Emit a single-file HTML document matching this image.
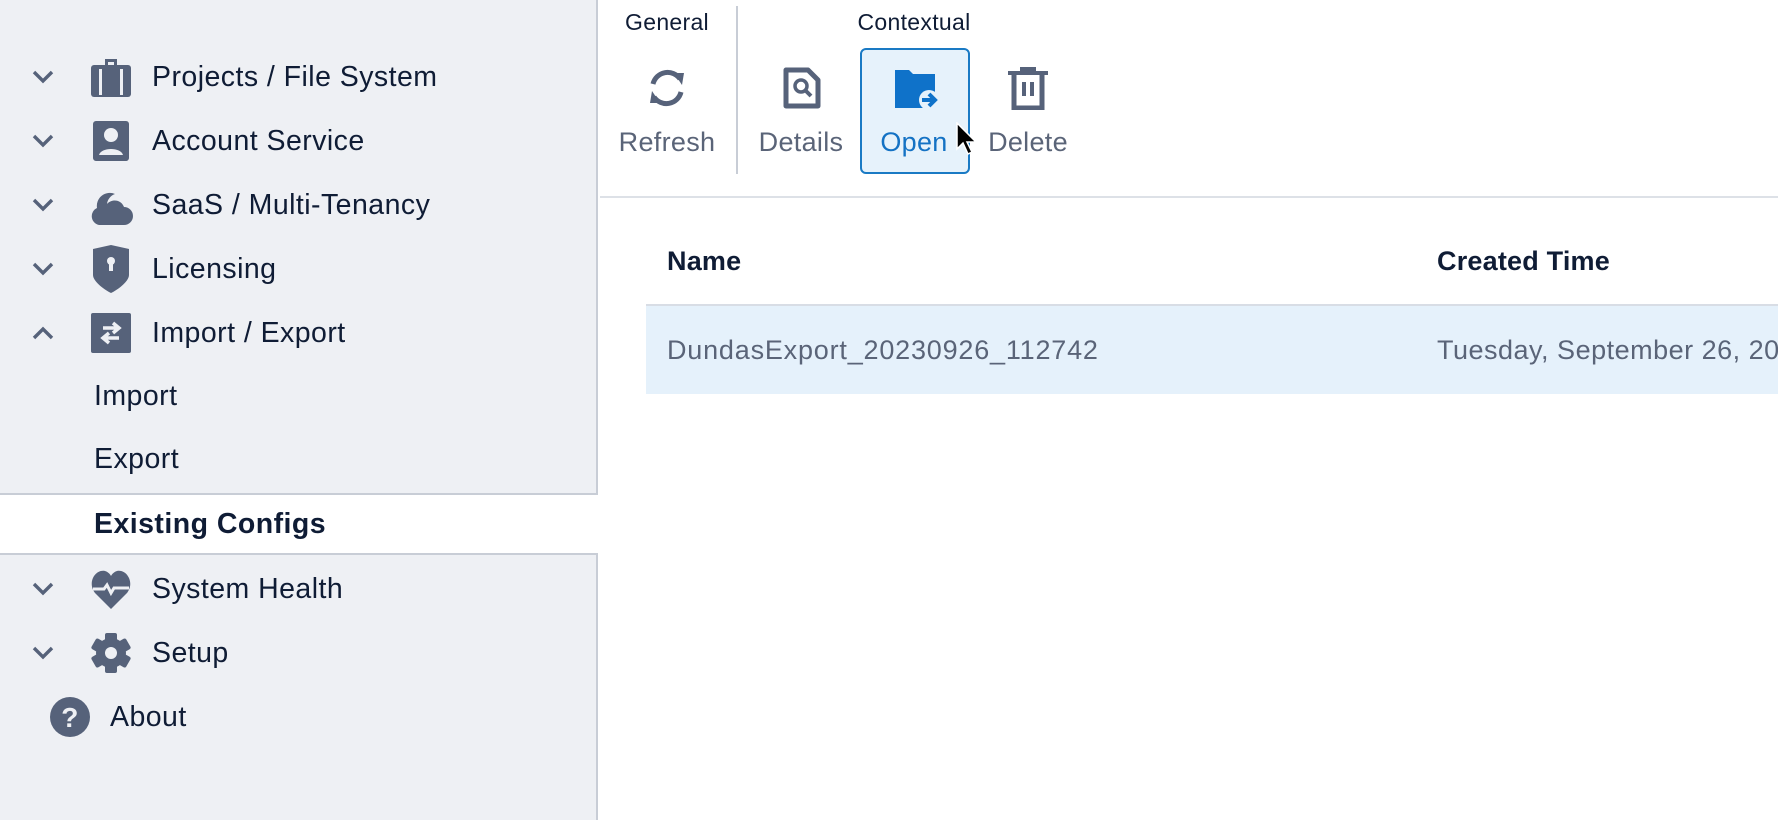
<!DOCTYPE html>
<html><head><meta charset="utf-8"><style>
*{margin:0;padding:0;box-sizing:border-box}
body{width:1778px;height:820px;overflow:hidden;background:#fff;font-family:"Liberation Sans",sans-serif;position:relative;color:#0f1c35}
#side{position:absolute;left:0;top:0;width:598px;height:820px;background:#eef0f4;border-right:2px solid #c8cdd6}
.row{position:absolute;left:0;height:40px;display:flex;align-items:center;font-size:28.5px;white-space:nowrap;letter-spacing:0.45px}
.chev{position:absolute;left:31px;width:24px;height:24px}
.ic{position:absolute;left:91px;width:40px;height:40px}
.t{position:absolute;left:152px}
.sub{position:absolute;left:94px;font-size:28.5px;white-space:nowrap;letter-spacing:0.45px}
.abs{position:absolute}
.lbl{position:absolute;font-size:27px;color:#5a6478;transform:translateX(-50%);white-space:nowrap;letter-spacing:0.3px}
</style></head><body>
<div id="side">
<div class="abs" style="left:0;top:493px;width:598px;height:62px;background:#fff;border-top:2px solid #c8cdd6;border-bottom:2px solid #c8cdd6"></div>
</div>
<svg width="0" height="0" style="position:absolute"><defs>
<symbol id="dn" viewBox="0 0 24 24"><path d="M3 7l9 9 9-9" fill="none" stroke="#56627a" stroke-width="3.4"/></symbol>
<symbol id="up" viewBox="0 0 24 24"><path d="M3 17l9-9 9 9" fill="none" stroke="#56627a" stroke-width="3.4"/></symbol>
</defs></svg>

<div class="row" style="top:57px;width:598px">
<svg class="chev" viewBox="0 0 24 24"><use href="#dn"/></svg>
<svg class="ic" viewBox="0 0 40 40"><path d="M14 2h12v6h-3V5h-6v3h-3z" fill="#56627a"/><rect x="0" y="8" width="40" height="32" rx="3" fill="#56627a"/><rect x="8" y="12" width="3" height="26" fill="#eef0f4"/><rect x="29" y="12" width="3" height="26" fill="#eef0f4"/></svg>
<span class="t">Projects / File System</span></div>
<div class="row" style="top:121px;width:598px">
<svg class="chev" viewBox="0 0 24 24"><use href="#dn"/></svg>
<svg class="ic" viewBox="0 0 40 40"><rect x="2" y="0" width="36" height="40" rx="3" fill="#56627a"/><circle cx="20" cy="14" r="7" fill="#eef0f4"/><path d="M8 34c2-8 22-8 24 0z" fill="#eef0f4"/></svg>
<span class="t">Account Service</span></div>
<div class="row" style="top:185px;width:598px">
<svg class="chev" viewBox="0 0 24 24"><use href="#dn"/></svg>
<svg class="ic" viewBox="0 0 44 44" style="left:89px;width:44px;height:44px"><path d="M10 42a9 9 0 0 1-2-17 13 13 0 0 1 18-14 12 12 0 0 0-8 10 10 10 0 0 1 17 3 9 9 0 0 1 0 18z" fill="#56627a"/></svg>
<span class="t">SaaS / Multi-Tenancy</span></div>
<div class="row" style="top:249px;width:598px">
<svg class="chev" viewBox="0 0 24 24"><use href="#dn"/></svg>
<svg class="ic" viewBox="0 0 40 48" style="height:48px;top:-4px"><path d="M20 0l18 4v26c0 6-10 14-18 18C12 44 2 36 2 30V4z" fill="#56627a"/><circle cx="20" cy="16" r="4" fill="#eef0f4"/><rect x="18" y="16" width="4" height="10" fill="#eef0f4"/></svg>
<span class="t">Licensing</span></div>
<div class="row" style="top:313px;width:598px">
<svg class="chev" viewBox="0 0 24 24"><use href="#up"/></svg>
<svg class="ic" viewBox="0 0 40 40"><rect x="0" y="0" width="40" height="40" rx="2" fill="#56627a"/><path d="M12 15h14M22 10l6 5-6 5M28 25H14M18 20l-6 5 6 5" fill="none" stroke="#eef0f4" stroke-width="3.5"/></svg>
<span class="t">Import / Export</span></div>
<div class="sub" style="top:380px">Import</div>
<div class="sub" style="top:443px">Export</div>
<div class="sub" style="top:508px;font-weight:bold">Existing Configs</div>
<div class="row" style="top:569px;width:598px">
<svg class="chev" viewBox="0 0 24 24"><use href="#dn"/></svg>
<svg class="ic" viewBox="0 0 40 40"><path d="M20 40L4 24C-4 14 4 0 14 2c3 1 5 3 6 5 1-2 3-4 6-5 10-2 18 12 10 22z" fill="#56627a"/><path d="M2 20h11l3-4 4 8 3-5h15" fill="none" stroke="#eef0f4" stroke-width="3"/></svg>
<span class="t">System Health</span></div>
<div class="row" style="top:633px;width:598px">
<svg class="chev" viewBox="0 0 24 24"><use href="#dn"/></svg>
<svg class="ic" viewBox="0 0 40 40"><g fill="#56627a"><circle cx="20" cy="20" r="15"/><rect x="14" y="0" width="12" height="40" rx="2"/><rect x="14" y="0" width="12" height="40" rx="2" transform="rotate(60 20 20)"/><rect x="14" y="0" width="12" height="40" rx="2" transform="rotate(120 20 20)"/></g><circle cx="20" cy="20" r="6" fill="#eef0f4"/></svg>
<span class="t">Setup</span></div>
<div class="row" style="top:697px;width:598px">
<svg class="abs" style="left:50px;top:0" width="40" height="40" viewBox="0 0 40 40"><circle cx="20" cy="20" r="20" fill="#56627a"/><text x="20" y="30" text-anchor="middle" font-family="Liberation Sans" font-weight="bold" font-size="28" fill="#eef0f4">?</text></svg>
<span class="t" style="left:110px">About</span></div>

<div class="abs" style="left:600px;top:196px;width:1178px;height:2px;background:#dde1e7"></div>
<div class="abs" style="left:736px;top:6px;width:2px;height:168px;background:#c8cdd6"></div>
<div class="lbl" style="left:667px;top:9px;font-size:23px;color:#0f1c35">General</div>
<div class="lbl" style="left:914px;top:9px;font-size:23px;color:#0f1c35">Contextual</div>
<div class="abs" style="left:860px;top:48px;width:110px;height:126px;background:#e6f2fb;border:2px solid #1a7ac4;border-radius:6px"></div>
<svg class="abs" style="left:646px;top:67px" width="42" height="42" viewBox="0 0 42 42"><g fill="none" stroke="#56627a" stroke-width="5"><path d="M7 17A15 15 0 0 1 34 12"/><path d="M35 25A15 15 0 0 1 8 30"/></g><path d="M28 6l10 0-2 12z" fill="#56627a"/><path d="M14 36l-10 0 2-12z" fill="#56627a"/></svg>
<div class="lbl" style="left:667px;top:127px">Refresh</div>
<svg class="abs" style="left:783px;top:67px" width="38" height="42" viewBox="0 0 38 42"><path d="M3 3h22l10 10v26H3z" fill="none" stroke="#56627a" stroke-width="5" stroke-linejoin="round"/><circle cx="18" cy="19" r="6" fill="none" stroke="#56627a" stroke-width="3.5"/><path d="M22 23l6 6" stroke="#56627a" stroke-width="4"/></svg>
<div class="lbl" style="left:801px;top:127px">Details</div>
<svg class="abs" style="left:895px;top:68px" width="44" height="42" viewBox="0 0 44 42"><path d="M0 2h14l4 4h22v34H0z" fill="#0f72c9"/><circle cx="34" cy="32" r="10" fill="#e6f2fb"/><path d="M27 32h12M34 26l6 6-6 6" fill="none" stroke="#0f72c9" stroke-width="4"/></svg>
<div class="lbl" style="left:914px;top:127px;color:#1472c4">Open</div>
<svg class="abs" style="left:1008px;top:66px" width="40" height="44" viewBox="0 0 40 44"><path d="M0 7h40M14 7V3h12v4" fill="none" stroke="#56627a" stroke-width="4"/><path d="M6 9v33h28V9" fill="none" stroke="#56627a" stroke-width="5"/><path d="M16 16v14M24 16v14" stroke="#56627a" stroke-width="4"/></svg>
<div class="lbl" style="left:1028px;top:127px">Delete</div>
<svg class="abs" style="left:956px;top:122px" width="24" height="36" viewBox="0 0 24 36"><path d="M1 1v26l6-6 5 11 4-2-5-10h9z" fill="#000" stroke="#fff" stroke-width="1.5"/></svg>

<div class="abs" style="left:667px;top:246px;font-size:27px;font-weight:bold;letter-spacing:0.2px">Name</div>
<div class="abs" style="left:1437px;top:246px;font-size:27px;font-weight:bold;letter-spacing:0.2px">Created Time</div>
<div class="abs" style="left:646px;top:304px;width:1132px;height:90px;background:#e5f1fb;border-top:2px solid #d8dde5"></div>
<div class="abs" style="left:667px;top:335px;font-size:27px;color:#5a6478;white-space:nowrap;letter-spacing:0.8px">DundasExport_20230926_112742</div>
<div class="abs" style="left:1437px;top:335px;font-size:27px;color:#5a6478;white-space:nowrap;width:341px;overflow:hidden;letter-spacing:0.5px">Tuesday, September 26, 2023</div>
</body></html>
